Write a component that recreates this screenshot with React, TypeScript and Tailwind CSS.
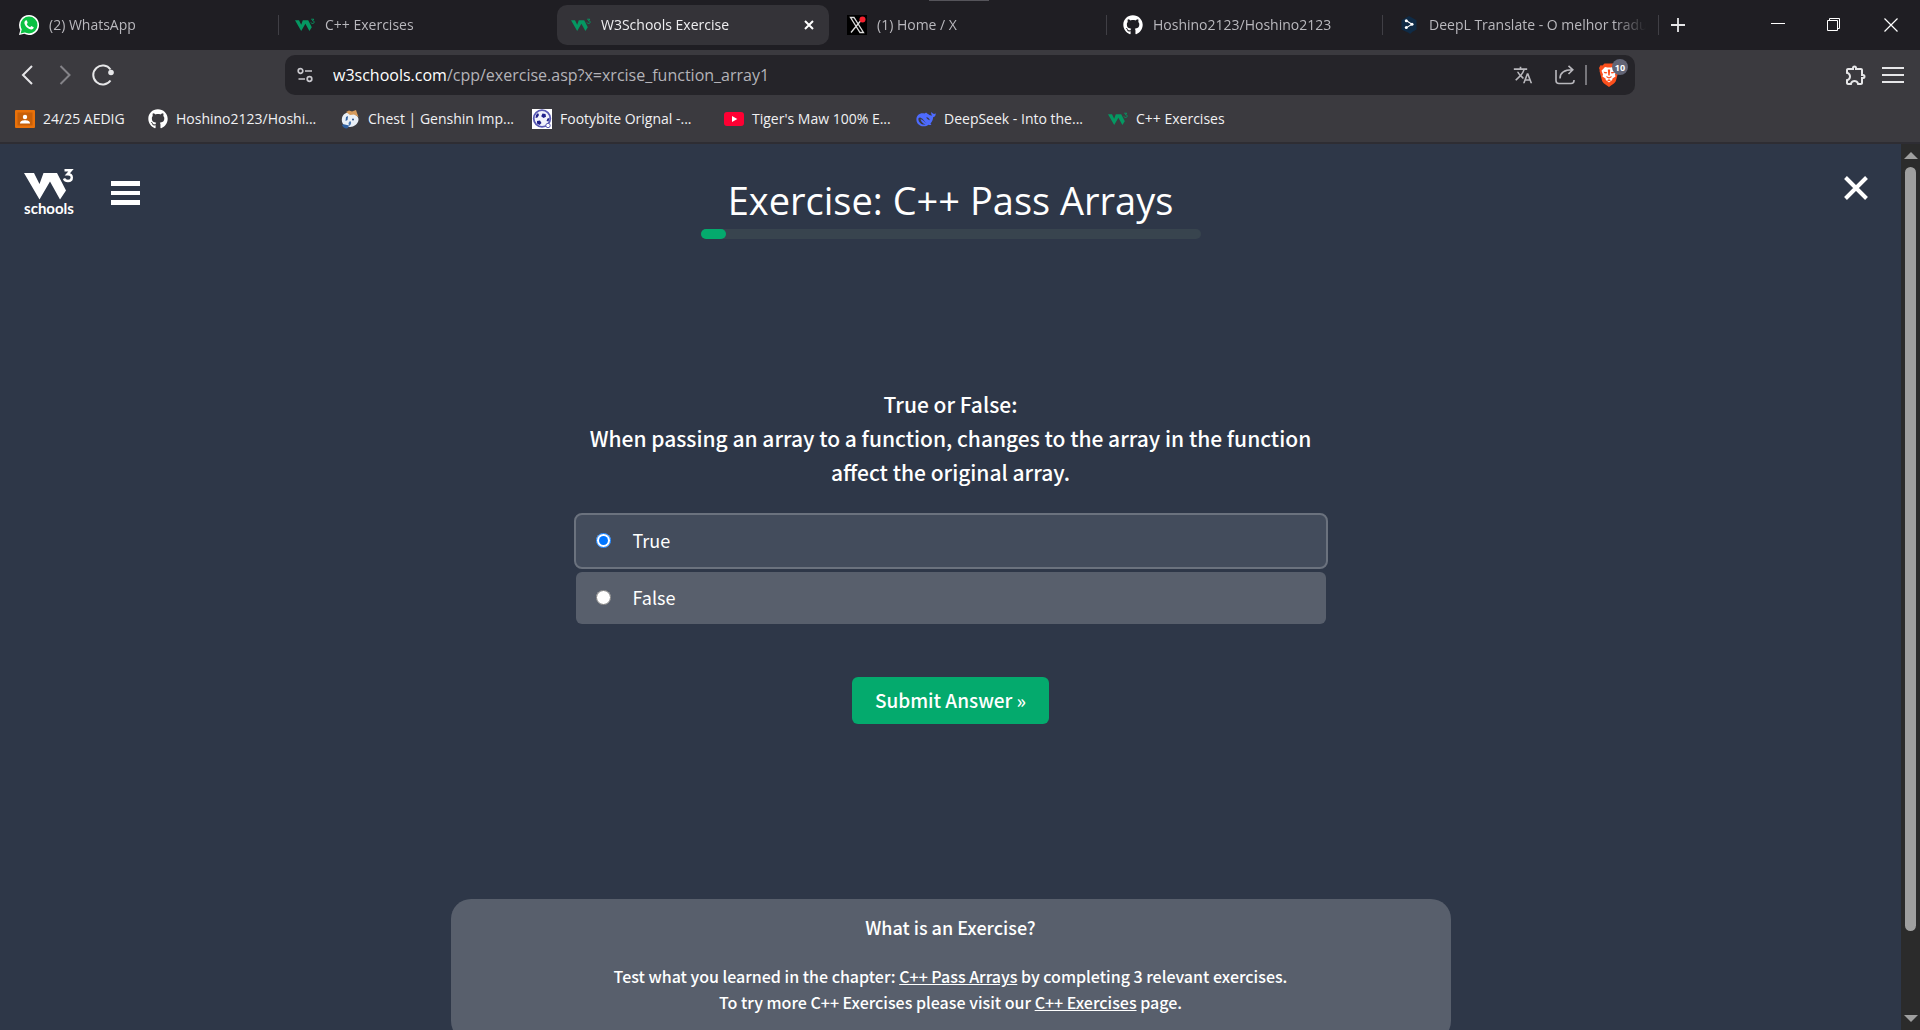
import { useState, type ReactNode } from "react";
import { FaGithub } from "react-icons/fa";
import { MdOutlineExtension, MdTranslate } from "react-icons/md";

function W3Mark({ className }: { className: string }) {
  return (
    <svg viewBox="0 0 50 34" className={className} aria-hidden="true">
      <path fill="currentColor" d="M0 4H10L15.500 15L19.500 4H33L42 21.500L36 30.500L26 12.500L15.500 30.500Z" />
      <path
        fill="none"
        stroke="currentColor"
        strokeWidth="2.4"
        d="M40.500 1.300H47L43.500 5.200C46.500 5 47.800 6.500 47.800 8.500C47.800 10.800 46 12 44 12C42 12 40.600 11.200 40 9.500"
      />
    </svg>
  );
}

function W3Favicon() {
  return (
    <span className="flex size-5 items-center justify-center text-[#059862]">
      <W3Mark className="h-[15px] w-5" />
    </span>
  );
}

function WhatsAppIcon() {
  return (
    <svg viewBox="0 0 20 20" className="size-5" aria-hidden="true">
      <path fill="#fff" d="M10 0A10 10 0 1 1 5.300 18.800L0 20L1.300 14.900A10 10 0 0 1 10 0Z" />
      <circle cx="10" cy="10" r="8.500" fill="#0ac143" />
      <path fill="#0ac143" d="M1.600 18.400L3 13.500L6.500 17.200Z" />
      <path
        fill="#fff"
        d="M7.300 5.200C6.800 5.200 5.400 5.900 5.400 7.800C5.400 10.800 9.300 14.500 12.200 14.500C14 14.500 14.800 13.200 14.700 12.200L12.300 11L11.200 12.300C9.600 11.800 8.300 10.500 7.700 9L8.700 7.900L7.900 5.400Z"
      />
    </svg>
  );
}

function XIcon() {
  return (
    <svg viewBox="0 0 20 20" className="size-5" aria-hidden="true">
      <rect width="20" height="20" fill="#000" />
      <path d="M3.500 2.500H7L16.500 17.500H13ZM16 3L4 17.500" fill="none" stroke="#ddd" strokeWidth="1.300" />
      <circle cx="15.500" cy="4.500" r="3" fill="#f4212e" />
    </svg>
  );
}

function DeepLIcon() {
  return (
    <svg viewBox="0 0 20 20" className="size-5" aria-hidden="true">
      <path fill="#0f2b46" d="M10 1L17.500 5.200V14.500L13.500 16.800L11 19L10 18L2.500 14.500V5.200Z" />
      <path d="M7.500 5.800L13 9.200L7.500 12.600" fill="none" stroke="#fff" strokeWidth="1.100" />
      <g fill="#fff">
        <circle cx="7.300" cy="5.800" r="1.500" />
        <circle cx="13" cy="9.200" r="1.500" />
        <circle cx="7.300" cy="12.600" r="1.500" />
      </g>
    </svg>
  );
}

function ClassroomIcon() {
  return (
    <svg viewBox="0 0 20 20" className="size-5" aria-hidden="true">
      <rect y="1" width="20" height="18" rx="1" fill="#e8710a" />
      <rect x="2.500" y="3.500" width="15" height="13" fill="#c75f08" />
      <circle cx="10" cy="8" r="2.200" fill="#fff" />
      <path d="M5 14.500C5 12 7.500 11.300 10 11.300S15 12 15 14.500Z" fill="#fff" />
    </svg>
  );
}

function GenshinIcon() {
  return (
    <svg viewBox="0 0 20 20" className="size-5" aria-hidden="true">
      <path fill="#e9eff6" d="M2 9C3 4 7 3 11 4C16 5 19 8 18.500 11C18 15 14 18 10 18C4 18 1 14 2 9Z" />
      <path fill="#d59a5b" d="M6 3L9 1.500L12 2.500L16 1L17 4L18.500 8L14 5.500L10 6Z" />
      <path fill="#2f5f9e" d="M2 16C4 14 7 17 9 16L8 19C6 20 3 19 2 16ZM6 8L8 7L7.500 11L5.500 12Z" />
      <path fill="#4b79b4" d="M10 12C12 13 11 16 9 17L8.500 14Z" />
      <circle cx="13" cy="10.500" r="1" fill="#244a7c" />
    </svg>
  );
}

function FootballIcon() {
  return (
    <svg viewBox="0 0 20 20" className="size-5" aria-hidden="true">
      <rect width="20" height="20" fill="#fff" />
      <circle cx="10" cy="9.500" r="8.300" fill="#f2f2fb" stroke="#5a5ab4" strokeWidth="1.800" />
      <g fill="#22228c">
        <path d="M10.500 4.500L13.500 5L14 7.800L11.500 9L9.200 7.200Z" />
        <path d="M4 6L6 4L7 6L5.500 8.500L3.500 9ZM5 12L8 11.500L9.500 14L7.500 16L5 14.500ZM15.500 9.500L17.500 9L16.500 12.500L14.500 12Z" />
      </g>
      <circle cx="16" cy="16.500" r="2.200" fill="#fff" stroke="#5a5ab4" strokeWidth="1" />
    </svg>
  );
}

function YouTubeIcon() {
  return (
    <svg viewBox="0 0 20 20" className="size-5" aria-hidden="true">
      <rect y="3" width="20" height="14" rx="3" fill="#ff0033" />
      <path d="M8 7L13.300 10L8 13Z" fill="#fff" />
    </svg>
  );
}

function DeepSeekIcon() {
  return (
    <svg viewBox="0 0 20 20" className="size-5" aria-hidden="true">
      <path
        fill="#4d6bfe"
        d="M19.700 4.300C18.800 4.800 18 5.200 17 4.600C16.200 4 15.600 3.500 15.300 3C14.900 4.500 15.300 5.700 16.200 6.400C14 6.700 13 5.600 11.500 4.700C10.800 4.300 10.700 3.500 9.700 3.800C9 4 8.800 4.500 8.300 4.400C3.600 3.600 0.300 6.500 0.400 10.700C0.500 14.800 4 17.300 7.600 17.300C9.800 17.300 11 16.800 12.400 15.700C13.200 16 14.700 16.300 15.500 15.800C15 15.300 14.600 15 14.500 14.400C16.300 12.600 17 10.500 17.100 8.200C18.900 8 19.900 6.500 19.700 4.300ZM10.900 14.600C8.700 13.700 7.600 10.700 4.500 10C5 13 7 14.800 9.600 15.200C6.500 16.400 2.700 14 2.400 10.500C2.300 9 3.300 8.300 4.600 8.700C7.400 9.600 8.700 13 10.900 14.600ZM13.700 11.300C12 10.800 10.500 9.400 10.300 8.200C11.700 7.900 13.800 9.500 13.700 11.300Z"
      />
    </svg>
  );
}

function BraveIcon() {
  return (
    <svg viewBox="0 0 20 24" className="h-6 w-5" aria-hidden="true">
      <path
        fill="#fb4f1c"
        d="M5.500 0.500H14.500L16.500 2.500L18.500 2.200L20 5L19.300 7L19.500 8L17 17.500C16.500 19.500 15 20.500 10 24C5 20.500 3.500 19.500 3 17.500L0.500 8L0.700 7L0 5L1.500 2.200L3.500 2.500Z"
      />
      <path
        fill="#fff"
        d="M6 4L8.500 4.500H11.500L14 4L17.500 7.800L16 11.500L16.500 13.500L13.500 15.500L13.200 17L10 19.500L6.800 17L6.500 15.500L3.500 13.500L4 11.500L2.500 7.800Z"
      />
      <path
        fill="#fb4f1c"
        d="M4.500 8.800L8.300 9.300L7.500 10.500L5.500 10.200ZM15.500 8.800L11.700 9.300L12.500 10.500L14.500 10.200ZM8.800 6.500H11.200L10.700 12.500H9.300ZM7.200 13L10 14.300L12.800 13L12.300 14.500L10 15.600L7.700 14.500ZM8 17.200L10 16.200L12 17.200L10 18.300Z"
      />
    </svg>
  );
}

type Tab = { title: string; icon: ReactNode; active?: boolean; divider?: boolean };

const tabs: Tab[] = [
  { title: "(2) WhatsApp", icon: <WhatsAppIcon />, divider: true },
  { title: "C++ Exercises", icon: <W3Favicon /> },
  { title: "W3Schools Exercise", icon: <W3Favicon />, active: true },
  { title: "(1) Home / X", icon: <XIcon />, divider: true },
  { title: "Hoshino2123/Hoshino2123", icon: <FaGithub className="size-5 text-white" />, divider: true },
  { title: "DeepL Translate - O melhor tradu", icon: <DeepLIcon />, divider: true },
];

const bookmarks: { title: string; icon: ReactNode }[] = [
  { title: "24/25 AEDIG", icon: <ClassroomIcon /> },
  { title: "Hoshino2123/Hoshi...", icon: <FaGithub className="size-5 text-white" /> },
  { title: "Chest | Genshin Imp...", icon: <GenshinIcon /> },
  { title: "Footybite Orignal -...", icon: <FootballIcon /> },
  { title: "Tiger's Maw 100% E...", icon: <YouTubeIcon /> },
  { title: "DeepSeek - Into the...", icon: <DeepSeekIcon /> },
  { title: "C++ Exercises", icon: <W3Favicon /> },
];

function TabBar() {
  return (
    <div className="relative flex h-[50px] shrink-0 items-center bg-[#1f1e23] pl-[3px]">
      <span className="absolute top-0 left-[929px] h-px w-[60px] bg-[#55545a]" />
      <div role="tablist" className="flex min-w-0 items-center">
        {tabs.map((tab) => (
          <div key={tab.title} className="flex w-[276px] min-w-0 items-center">
            <div
              className={
                tab.active
                  ? "mx-0.5 flex h-10 min-w-0 flex-1 items-center rounded-[10px] bg-[#343338] pr-3 pl-3.5 text-[#eeeef0]"
                  : "flex h-10 min-w-0 flex-1 items-center pr-3 pl-4 text-[#b9b8bd]"
              }
            >
              <button role="tab" aria-selected={!!tab.active} className="flex min-w-0 flex-1 items-center gap-2.5 text-left">
                <span className="shrink-0">{tab.icon}</span>
                <span className="min-w-0 flex-1 overflow-hidden mask-r-from-85% text-sm whitespace-nowrap">{tab.title}</span>
              </button>
              {tab.active && (
                <button aria-label="Close tab" className="flex size-4 items-center justify-center text-white">
                  <svg viewBox="0 0 10 10" className="size-2.5">
                    <path d="M1 1L9 9M9 1L1 9" stroke="currentColor" strokeWidth="2" />
                  </svg>
                </button>
              )}
            </div>
            {tab.divider && <span className="h-5 w-px shrink-0 bg-[#403f45]" />}
          </div>
        ))}
      </div>
      <button aria-label="New tab" className="ml-3 text-[#e6e6e8]">
        <svg viewBox="0 0 14 14" className="size-3.5">
          <path d="M7 0V14M0 7H14" stroke="currentColor" strokeWidth="1.800" />
        </svg>
      </button>
      <div className="ml-auto flex h-full text-white">
        <button aria-label="Minimize" className="flex w-14 items-center justify-center">
          <svg viewBox="0 0 14 14" className="size-3.5">
            <path d="M0 5.500H14" stroke="currentColor" />
          </svg>
        </button>
        <button aria-label="Restore" className="flex w-14 items-center justify-center">
          <svg viewBox="0 0 14 14" className="size-3.5" fill="none" stroke="currentColor">
            <path d="M0.500 2.500H10.500V12.500H0.500ZM2.500 2.500V0.500H12.500V10.500H10.500" />
          </svg>
        </button>
        <button aria-label="Close" className="flex w-[58px] items-center justify-center">
          <svg viewBox="0 0 14 14" className="size-3.5">
            <path d="M0.500 0.500L13.500 13.500M13.500 0.500L0.500 13.500" stroke="currentColor" strokeWidth="1.200" />
          </svg>
        </button>
      </div>
    </div>
  );
}

function Toolbar() {
  return (
    <div className="flex h-[50px] shrink-0 items-center bg-[#3b3a3f] text-[#e6e6e8]">
      <button aria-label="Back" className="ml-5">
        <svg viewBox="0 0 14 20" className="h-5 w-3.5" fill="none" stroke="currentColor" strokeWidth="2">
          <path d="M12 1L3 10L12 19" />
        </svg>
      </button>
      <button aria-label="Forward" className="ml-6 text-[#848388]">
        <svg viewBox="0 0 14 20" className="h-5 w-3.5" fill="none" stroke="currentColor" strokeWidth="2">
          <path d="M2.500 1L11.500 10L2.500 19" />
        </svg>
      </button>
      <button aria-label="Reload" className="ml-5">
        <svg viewBox="0 0 22 22" className="size-[22px]" fill="none" stroke="currentColor" strokeWidth="2">
          <path d="M18.500 5.500A9.500 9.500 0 1 0 18.500 16.500" />
          <circle cx="19" cy="8.500" r="2.800" fill="currentColor" stroke="none" />
        </svg>
      </button>
      <div className="mr-[209px] ml-[171px] flex h-10 min-w-0 flex-1 items-center rounded-[10px] bg-[#252429] pl-3">
        <button aria-label="Site information" className="text-[#c9c8cd]">
          <svg viewBox="0 0 16 16" className="size-4" fill="none" stroke="currentColor" strokeWidth="1.700">
            <circle cx="3.500" cy="4" r="2.300" />
            <path d="M8 4H15M1.500 12H8" />
            <circle cx="12.500" cy="12" r="2.300" />
          </svg>
        </button>
        <div className="ml-5 flex-1 truncate text-base text-[#b4b3b8]">
          <span className="text-white">w3schools.com</span>/cpp/exercise.asp?x=xrcise_function_array1
        </div>
        <button aria-label="Translate" className="text-[#b9b8bd]">
          <MdTranslate className="size-5" />
        </button>
        <button aria-label="Share" className="ml-[22px] text-[#b9b8bd]">
          <svg viewBox="0 0 20 20" className="size-5" fill="none" stroke="currentColor" strokeWidth="1.600">
            <path d="M1 5V15.500Q1 18.500 4 18.500H16Q19 18.500 19 15.500V15M5 13.500C5 8 9 4.800 17.500 4.800M13.500 0.800L17.800 4.800L13.500 9" />
          </svg>
        </button>
        <span className="ml-2.5 h-5 w-0.5 bg-[#77767b]" />
        <button aria-label="Brave Shields" className="relative mr-4 ml-3">
          <BraveIcon />
          <span className="absolute -top-1 left-[13px] flex h-4 w-4 items-center justify-center rounded-full bg-[#626475] text-[9px] leading-none font-bold text-white">
            10
          </span>
        </button>
      </div>
      <button aria-label="Extensions" className="shrink-0">
        <MdOutlineExtension className="size-6" />
      </button>
      <button aria-label="Menu" className="mr-4 ml-3.5 shrink-0">
        <svg viewBox="0 0 22 16" className="h-4 w-[22px]" stroke="currentColor" strokeWidth="2">
          <path d="M0 1H22M0 8H22M0 15H22" />
        </svg>
      </button>
    </div>
  );
}

function BookmarksBar() {
  return (
    <nav className="flex h-[44px] shrink-0 items-center border-b-2 border-[#2e2d33] bg-[#3b3a3f] pb-1 pl-[15px]">
      {bookmarks.map((bookmark, index) => (
        <a
          key={bookmark.title}
          href="#"
          className={
            index === 0
              ? "flex w-[133px] items-center gap-2 text-sm whitespace-nowrap text-[#f1f1f3]"
              : "flex w-48 items-center gap-2 text-sm whitespace-nowrap text-[#f1f1f3]"
          }
        >
          <span className="shrink-0">{bookmark.icon}</span>
          {bookmark.title}
        </a>
      ))}
    </nav>
  );
}

function Scrollbar() {
  return (
    <div className="flex w-[19px] shrink-0 flex-col items-center bg-[#2b2b2b] py-2" aria-hidden="true">
      <svg viewBox="0 0 14 7" className="h-[7px] w-3.5">
        <path d="M7 0L14 7H0Z" fill="#9f9f9f" />
      </svg>
      <div className="my-2 flex w-full flex-1 flex-col items-center">
        <div className="h-[91%] w-[11px] rounded-full bg-[#9f9f9f]" />
      </div>
      <svg viewBox="0 0 14 7" className="h-[7px] w-3.5">
        <path d="M0 0H14L7 7Z" fill="#9f9f9f" />
      </svg>
    </div>
  );
}

function ExercisePage() {
  const [answer, setAnswer] = useState("True");
  return (
    <main className="relative flex min-w-0 flex-1 flex-col items-center overflow-hidden bg-[#2e3748] font-['Noto_Sans_CJK_JP',sans-serif] text-white">
      <div className="absolute top-[25px] left-6 flex items-start gap-[37px]">
        <a href="#" aria-label="W3Schools home" className="flex w-[50px] flex-col items-center">
          <W3Mark className="h-[34px] w-[50px]" />
          <span className="font-['Lato',sans-serif] text-[15px] leading-[10px] font-bold">schools</span>
        </a>
        <button aria-label="Menu" className="mt-3 flex flex-col gap-[5px]">
          <span className="h-[5px] w-[29px] bg-white" />
          <span className="h-[4px] w-[29px] bg-white" />
          <span className="h-[5px] w-[29px] bg-white" />
        </button>
      </div>
      <button aria-label="Close exercise" className="absolute top-8 right-[33px]">
        <svg viewBox="0 0 24 24" className="size-6">
          <path d="M1.500 1.500L22.500 22.500M22.500 1.500L1.500 22.500" stroke="currentColor" strokeWidth="4" />
        </svg>
      </button>

      <h1 className="mt-[30px] shrink-0 pb-[3px] font-['Open_Sans',sans-serif] text-[38px] leading-[52px]">
        Exercise: C++ Pass Arrays
      </h1>
      <div role="progressbar" aria-valuenow={5} className="h-2.5 w-[500px] shrink-0 rounded-full bg-[#38444e]">
        <div className="h-full w-[5%] rounded-full bg-[#04aa6d]" />
      </div>

      <form
        className="mt-[148px] flex w-[754px] shrink-0 flex-col items-center"
        onSubmit={(event) => event.preventDefault()}
      >
        <p className="text-center text-[21px] leading-[34px] font-medium">
          True or False:
          <br />
          When passing an array to a function, changes to the array in the function affect the original array.
        </p>
        <div className="mt-6 flex w-full flex-col gap-[3px]">
          {["True", "False"].map((option) => (
            <label
              key={option}
              className={
                option === answer
                  ? "flex h-14 items-center gap-[22px] rounded-lg border-2 border-[#6b727e] bg-[#434c5c] pb-0.5 pl-5 text-lg"
                  : "mx-0.5 flex h-[52px] items-center gap-[22px] rounded-md bg-[#585f6c] pb-0.5 pl-5 text-lg"
              }
            >
              <input
                type="radio"
                name="answer"
                value={option}
                checked={option === answer}
                onChange={() => setAnswer(option)}
                className="size-[15px]"
              />
              {option}
            </label>
          ))}
        </div>
        <button type="submit" className="mt-[53px] h-[47px] rounded-md bg-[#04aa6d] px-[23px] text-[19px] font-medium">
          Submit Answer »
        </button>
      </form>

      <section className="mt-[175px] w-[1000px] shrink-0 rounded-[20px] bg-[#585f6c] pt-[13px] pb-[26px] text-center font-medium">
        <h2 className="text-lg leading-[30px]">What is an Exercise?</h2>
        <p className="mt-[21px] text-base leading-[26px]">
          Test what you learned in the chapter:{" "}
          <a href="#" className="underline">
            C++ Pass Arrays
          </a>{" "}
          by completing 3 relevant exercises.
          <br />
          To try more C++ Exercises please visit our{" "}
          <a href="#" className="underline">
            C++ Exercises
          </a>{" "}
          page.
        </p>
      </section>
    </main>
  );
}

export default function App() {
  return (
    <div className="flex h-screen flex-col overflow-hidden bg-[#1f1e23] font-['Open_Sans',sans-serif]">
      <TabBar />
      <Toolbar />
      <BookmarksBar />
      <div className="flex min-h-0 flex-1">
        <ExercisePage />
        <Scrollbar />
      </div>
    </div>
  );
}
